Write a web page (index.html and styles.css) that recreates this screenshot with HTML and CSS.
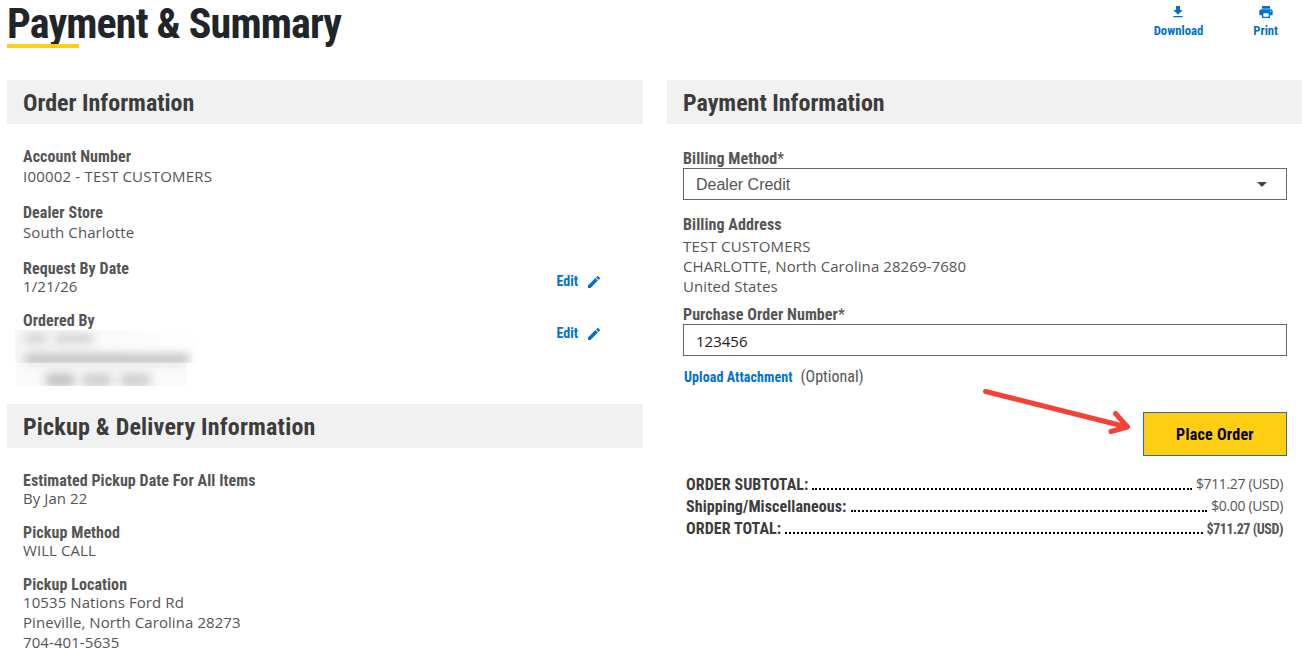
FILE: index.html
```html
<!DOCTYPE html>
<html lang="en">
<head>
    <meta charset="UTF-8">
    <meta name="viewport" content="width=device-width, initial-scale=1.0">
    <title>Payment &amp; Summary</title>
    <link rel="stylesheet" href="styles.css">
</head>
<body>

    <header class="page-header">
        <h1>Payment &amp; Summary</h1>
        <div class="actions">
            <a class="action" href="#">
                <svg width="16" height="16" viewBox="0 0 24 24"><path d="M19 9h-4V3H9v6H5l7 7 7-7zM5 18v2h14v-2H5z"/></svg>
                <span>Download</span>
            </a>
            <a class="action" href="#">
                <svg width="16" height="16" viewBox="0 0 24 24"><path d="M19 8H5c-1.700 0-3 1.300-3 3v6h4v4h12v-4h4v-6c0-1.700-1.300-3-3-3zm-3 11H8v-5h8v5zm3-7c-.6 0-1-.4-1-1s.4-1 1-1 1 .4 1 1-.4 1-1 1zm-1-9H6v4h12V3z"/></svg>
                <span>Print</span>
            </a>
        </div>
    </header>

    <main class="columns">
        <div class="column">
            <section class="panel order-panel">
                <h2>Order Information</h2>
                <div class="panel-body">
                    <div class="field loose">
                        <div class="label">Account Number</div>
                        <div class="value caps">I00002 - TEST CUSTOMERS</div>
                    </div>
                    <div class="field loose">
                        <div class="label">Dealer Store</div>
                        <div class="value">South Charlotte</div>
                    </div>
                    <div class="field-row">
                        <div class="field">
                            <div class="label">Request By Date</div>
                            <div class="value">1/21/26</div>
                        </div>
                        <a class="edit" href="#">Edit
                            <svg width="16" height="16" viewBox="0 0 24 24"><path d="M3 17.250V21h3.750L17.800 9.900l-3.750-3.750L3 17.250zM20.700 7c.4-.4.4-1 0-1.400l-2.300-2.300c-.4-.4-1-.4-1.400 0l-1.900 1.900 3.750 3.750L20.700 7z"/></svg>
                        </a>
                    </div>
                    <div class="field-row">
                        <div class="field">
                            <div class="label">Ordered By</div>
                            <div class="redacted">
                                <div class="strip">
                                    <div class="smudge first-name"></div>
                                    <div class="smudge last-name"></div>
                                    <div class="smudge email"></div>
                                </div>
                                <div class="strip phone-strip">
                                    <div class="smudge email-edge"></div>
                                    <div class="smudge area"></div>
                                    <div class="smudge phone"></div>
                                    <div class="smudge phone"></div>
                                </div>
                            </div>
                        </div>
                        <a class="edit" href="#">Edit
                            <svg width="16" height="16" viewBox="0 0 24 24"><path d="M3 17.250V21h3.750L17.800 9.900l-3.750-3.750L3 17.250zM20.700 7c.4-.4.4-1 0-1.400l-2.300-2.300c-.4-.4-1-.4-1.400 0l-1.900 1.900 3.750 3.750L20.700 7z"/></svg>
                        </a>
                    </div>
                </div>
            </section>

            <section class="panel">
                <h2 class="wide">Pickup &amp; Delivery Information</h2>
                <div class="panel-body pickup-body">
                    <div class="field">
                        <div class="label">Estimated Pickup Date For All Items</div>
                        <div class="value">By Jan 22</div>
                    </div>
                    <div class="field">
                        <div class="label">Pickup Method</div>
                        <div class="value">WILL CALL</div>
                    </div>
                    <div class="field">
                        <div class="label">Pickup Location</div>
                        <div class="value">10535 Nations Ford Rd<br>Pineville, North Carolina 28273<br>704-401-5635</div>
                    </div>
                </div>
            </section>
        </div>

        <div class="column">
            <section class="panel">
                <h2>Payment Information</h2>
                <div class="panel-body payment-body">
                    <div class="label">Billing Method<span class="star">*</span></div>
                    <div class="select">
                        <span>Dealer Credit</span>
                        <svg width="10" height="5" viewBox="0 0 10 5"><path d="M0 0h10L5 5z"/></svg>
                    </div>

                    <div class="label address-label">Billing Address</div>
                    <div class="value"><span class="caps">TEST CUSTOMERS</span><br>CHARLOTTE, North Carolina 28269-7680<br>United States</div>

                    <div class="label po-label">Purchase Order Number<span class="star">*</span></div>
                    <input class="input" type="text" value="123456">

                    <div class="upload">
                        <a href="#">Upload Attachment</a>
                        <span>(Optional)</span>
                    </div>

                    <div class="submit">
                        <button class="button">Place Order</button>
                        <svg class="arrow" width="150" height="50" viewBox="0 0 150 50"><path d="M5.500 6.500L147 42M135.500 28.500L147.500 42L131 46.500"/></svg>
                    </div>

                    <div class="totals">
                        <div class="total-row"><span class="total-name">ORDER SUBTOTAL:</span><span class="dots"></span><span class="amount">$711.27 (USD)</span></div>
                        <div class="total-row"><span class="total-name">Shipping/Miscellaneous:</span><span class="dots"></span><span class="amount">$0.00 (USD)</span></div>
                        <div class="total-row grand"><span class="total-name">ORDER TOTAL:</span><span class="dots"></span><span class="amount">$711.27 (USD)</span></div>
                    </div>
                </div>
            </section>
        </div>
    </main>

</body>
</html>
```
FILE: styles.css
```css
* {
    box-sizing: border-box;
}

body {
    margin: 0;
    height: 665px;
    overflow: hidden;
    background-color: #fff;
    color: #555;
    font-family: "Open Sans", "Noto Sans", sans-serif;
    font-size: 15px;
    line-height: 20px;
}

a {
    color: #0072ce;
    text-decoration: none;
}

h1, h2, .label, .action, .edit, .upload, .button, .total-name, .grand .amount {
    font-family: "Roboto Condensed", "Liberation Sans Narrow", Arial, sans-serif;
    font-weight: bold;
}

/* Page title and actions */
.page-header {
    display: flex;
    justify-content: space-between;
    height: 80px;
    padding-left: 7px;
}

h1 {
    position: relative;
    margin: 0;
    height: 48px;
    font-size: 42px;
    line-height: 48px;
    letter-spacing: -0.85px;
    color: #212529;
}

h1::after {
    content: "";
    position: absolute;
    left: 0;
    bottom: 0;
    width: 72px;
    height: 4px;
    background-color: #ffcd11;
}

.actions {
    display: flex;
    gap: 50px;
    padding: 4px 24px 0 0;
}

.action {
    display: flex;
    flex-direction: column;
    align-items: center;
    font-size: 12.7px;
    line-height: 22px;
}

.action svg, .edit svg {
    fill: #0072ce;
}

/* Two column layout */
.columns {
    display: grid;
    grid-template-columns: 636px 635px;
    gap: 24px;
    padding-left: 7px;
}

.order-panel {
    height: 324px;
}

h2 {
    margin: 0;
    padding: 0 16px;
    height: 44px;
    background-color: #f1f1f1;
    color: #3c3c3c;
    font-size: 24px;
    line-height: 46px;
}

.wide {
    letter-spacing: 0.2px;
}

.panel-body {
    display: flex;
    flex-direction: column;
    gap: 16px;
    padding: 23px 16px 0;
}

.pickup-body {
    padding-top: 25px;
}

.label {
    font-size: 16px;
    line-height: 16px;
    letter-spacing: 0.08px;
}

.value {
    margin-top: -1px;
    margin-bottom: 1px;
    letter-spacing: 0.08px;
}

.caps {
    letter-spacing: 0.2px;
}

.loose .label {
    line-height: 20px;
}

.field-row {
    display: flex;
    justify-content: space-between;
    padding-top: 2px;
    margin-bottom: -2px;
}

.edit {
    display: flex;
    align-items: center;
    gap: 8px;
    height: 16px;
    margin: 12px 25px 0 0;
    font-size: 14px;
}

.edit svg {
    margin-top: 1px;
}

/* Hidden contact details */
.redacted {
    margin: 1px 0 0 -8px;
}

.strip {
    display: flex;
    flex-wrap: wrap;
    align-content: flex-start;
    gap: 11px 8px;
    width: 188px;
    height: 33px;
    padding: 4px 0 0 10px;
    overflow: hidden;
    background: linear-gradient(to right, #f6f6f6, #fff);
}

.smudge {
    height: 9px;
    background-color: #cfcfcf;
    filter: blur(5px);
}

.first-name {
    width: 22px;
}

.last-name {
    width: 38px;
    margin-right: 60px;
}

.email {
    width: 164px;
    height: 10px;
    background-color: #bdbdbd;
    filter: blur(5px);
}

.phone-strip {
    width: 171px;
    height: 23px;
    padding: 0 0 0 10px;
    margin-left: 1px;
    gap: 8px;
    background: #fafafa;
}

.email-edge {
    width: 160px;
    height: 2px;
    filter: blur(3px);
}

.area {
    width: 28px;
    height: 14px;
    margin-left: 20px;
    background-color: #c2c2c2;
}

.phone {
    width: 30px;
    height: 14px;
}

/* Payment form */
.payment-body {
    display: block;
    padding: 27px 15px 0 16px;
}

.star {
    font-weight: normal;
}

.select, .input {
    display: flex;
    align-items: center;
    justify-content: space-between;
    width: 100%;
    height: 32px;
    margin-top: 1px;
    padding: 0 12px;
    border: 1px solid #666;
    background-color: #fff;
}

.select {
    padding: 1px 19px 0 12px;
    font-family: "Liberation Sans", Arial, sans-serif;
    font-size: 16px;
}

.select svg {
    fill: #444;
}

.input {
    padding-top: 2px;
    color: #212121;
    font-family: "Open Sans", sans-serif;
    font-size: 15px;
}

.address-label {
    margin: 17px 0 4px;
}

.po-label {
    margin-top: 11px;
}

.upload {
    display: flex;
    gap: 8px;
    margin-top: 11px;
    padding-left: 1px;
    font-size: 14px;
    letter-spacing: 0.08px;
}

.upload span {
    font-size: 16px;
    font-weight: normal;
    letter-spacing: 0;
}

.submit {
    position: relative;
    display: flex;
    justify-content: flex-end;
    margin-top: 25px;
}

.button {
    width: 144px;
    height: 44px;
    padding: 0;
    border: 1px solid #2f6f9f;
    background-color: #ffcd11;
    color: #000;
    font-size: 16px;
    letter-spacing: 0.25px;
}

.arrow {
    position: absolute;
    right: 157px;
    top: -27px;
    fill: none;
    stroke: #f44336;
    stroke-width: 5;
    stroke-linecap: round;
    stroke-linejoin: round;
}

/* Order totals */
.totals {
    padding: 18px 4px 0 3px;
}

.total-row {
    display: flex;
    height: 22px;
    line-height: 22px;
}

.total-name {
    color: #3c3c3c;
    font-size: 16px;
    letter-spacing: 0.08px;
}

.dots {
    flex: 1;
    height: 16px;
    margin: 0 4px;
    border-bottom: 2px dotted #000;
}

.amount {
    font-size: 14px;
    line-height: 20px;
    letter-spacing: -0.35px;
}

.grand .amount {
    line-height: 22px;
    letter-spacing: -0.45px;
}
```
